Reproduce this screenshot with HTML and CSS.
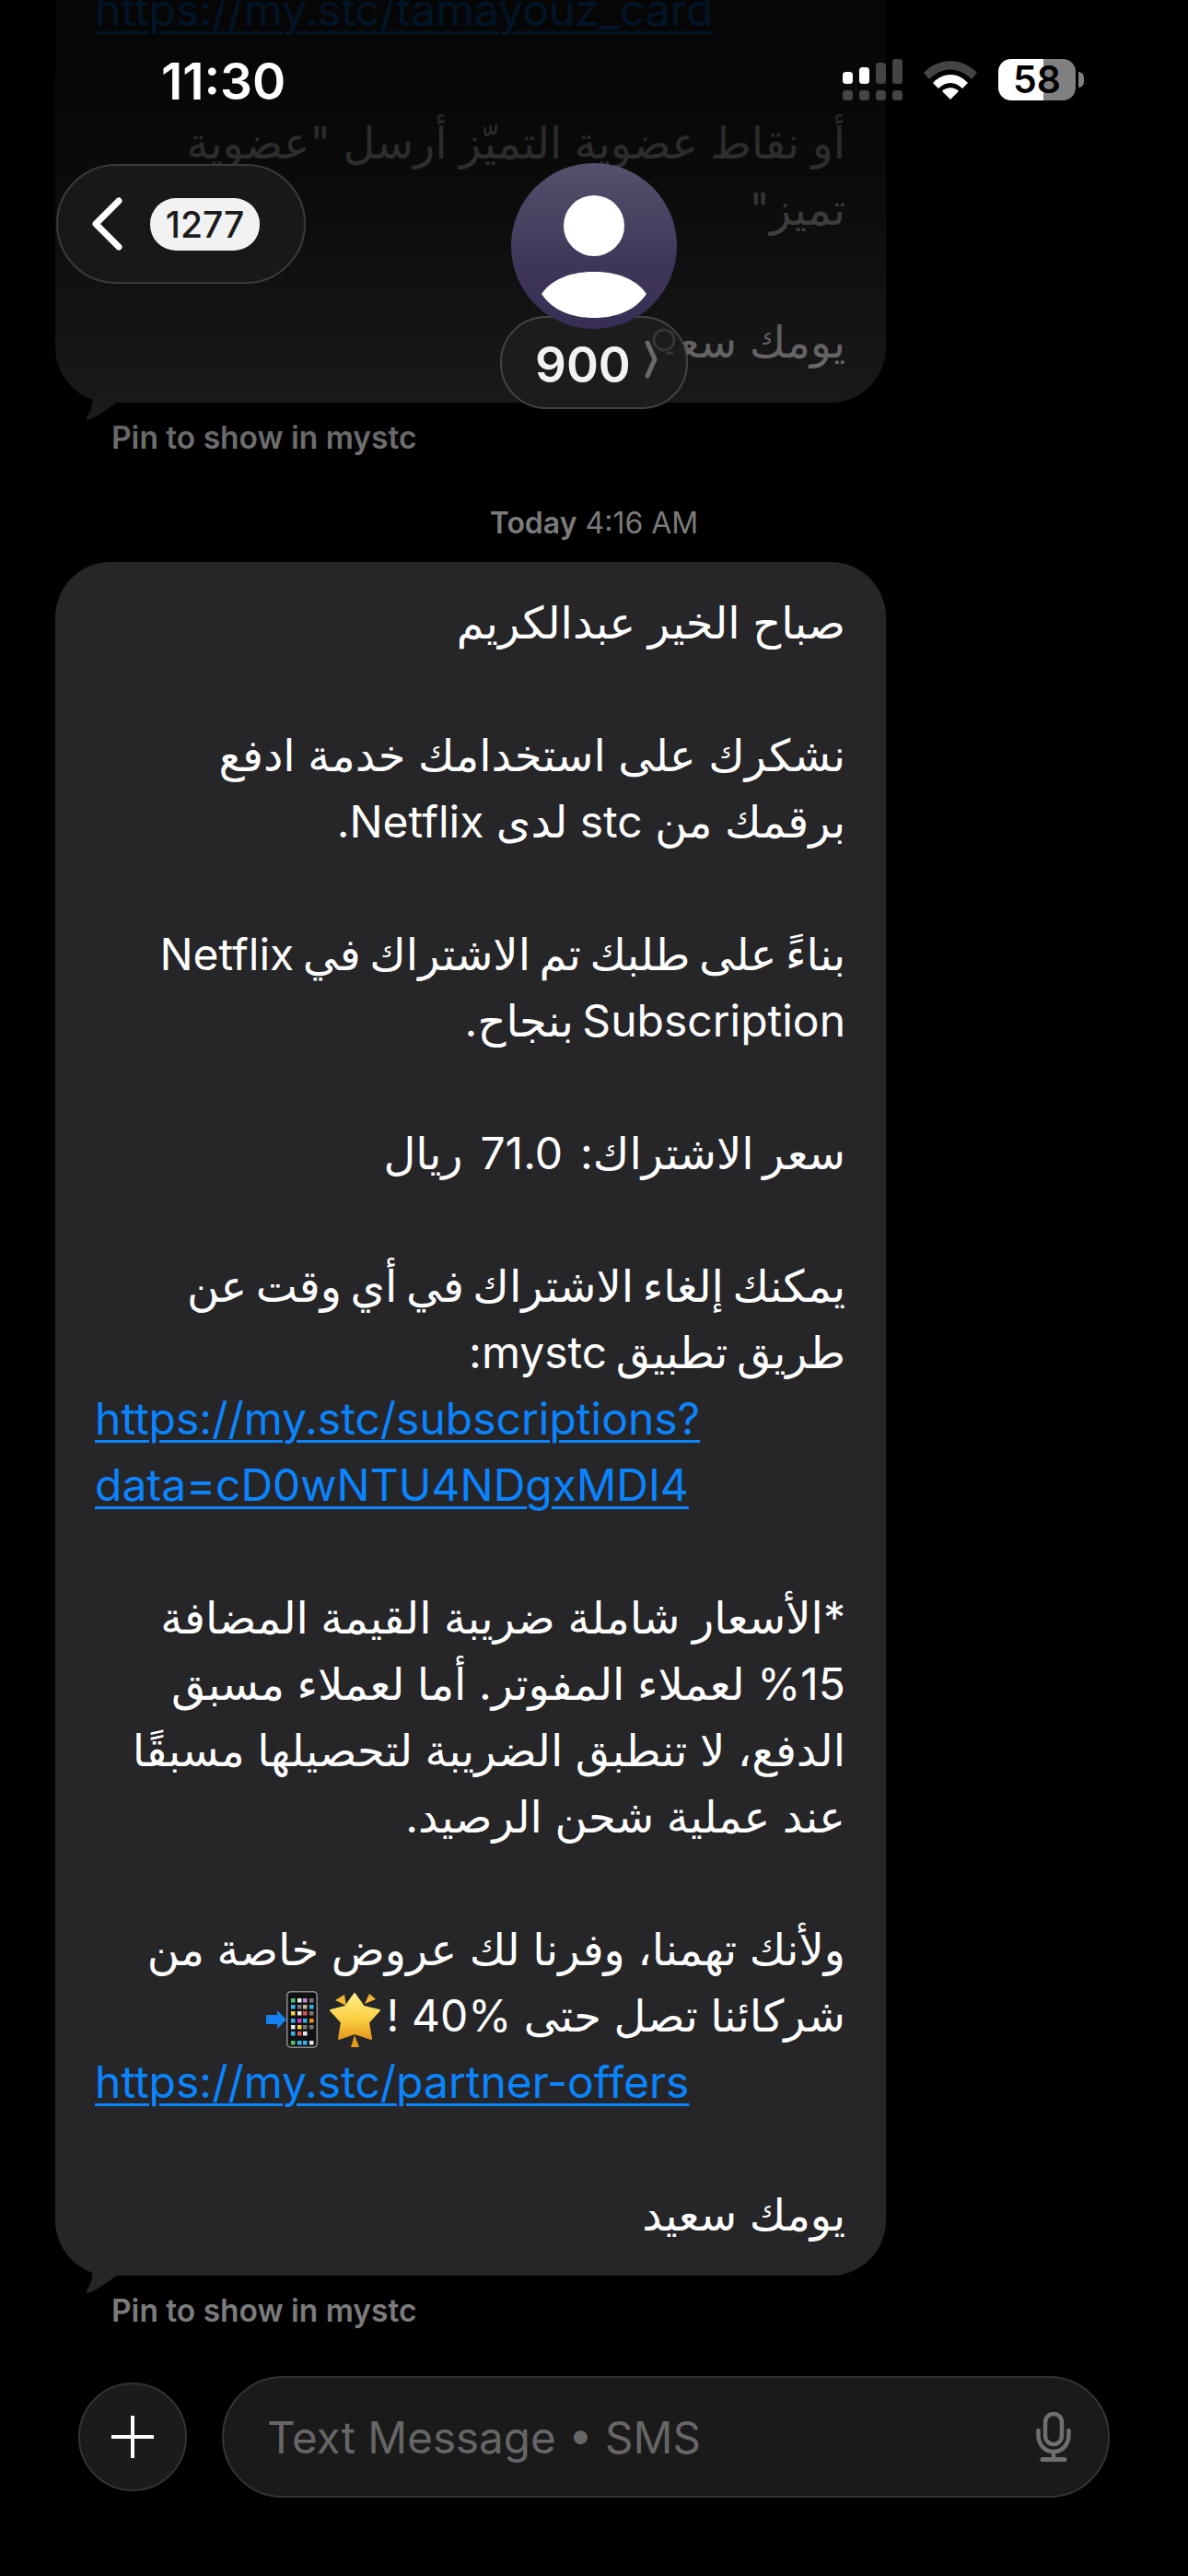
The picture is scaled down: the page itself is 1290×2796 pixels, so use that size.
FILE: index.html
```html
<!DOCTYPE html>
<html lang="ar">
<head>
  <meta charset="UTF-8">
  <title>900</title>
  <link rel="stylesheet" href="styles.css">
</head>
<body>
<div class="screen">

  <!-- messages -->
  <main class="thread">
    <div class="bubble bubble-old">
      <a class="url">https://my.stc/tamayouz_card</a>
      <p class="para">أو نقاط عضوية التميّز أرسل "عضوية<br>تميز"</p>
      <p class="para">يومك سعيد</p>
      <svg class="tail" viewBox="0 0 50 32"><path d="M0 0 L6 0 C8 12 4 20 0 26 C-1 28 1 30 4 28 C14 24 24 16 46 0 Z"/></svg>
    </div>
    <div class="note">Pin to show in mystc</div>

    <div class="stamp"><b>Today</b> 4:16 AM</div>

    <div class="bubble">
      <p class="para">صباح الخير عبدالكريم</p>
      <p class="para">نشكرك على استخدامك خدمة ادفع<br>برقمك من stc لدى Netflix.</p>
      <p class="para para-narrow">بناءً على طلبك تم الاشتراك في Netflix<br>Subscription بنجاح.</p>
      <p class="para para-narrow">سعر الاشتراك:  71.0  ريال</p>
      <p class="para para-tight para-narrow">يمكنك إلغاء الاشتراك في أي وقت عن<br>طريق تطبيق mystc:</p>
      <a class="url">https://my.stc/subscriptions?<br>data=cD0wNTU4NDgxMDI4</a>
      <p class="para">*الأسعار شاملة ضريبة القيمة المضافة<br>%15 لعملاء المفوتر. أما لعملاء مسبق<br>الدفع، لا تنطبق الضريبة لتحصيلها مسبقًا<br>عند عملية شحن الرصيد.</p>
      <p class="para para-tight">ولأنك تهمنا، وفرنا لك عروض خاصة من<br>شركائنا تصل حتى %40 ! <svg class="emoji star" viewBox="0 0 58 62">
          <defs><linearGradient id="starFill" x1="0" y1="0" x2="0" y2="1"><stop offset="0" stop-color="#fff08a"/><stop offset=".55" stop-color="#fbd043"/><stop offset="1" stop-color="#e59a1c"/></linearGradient></defs>
          <path fill="url(#starFill)" stroke="url(#starFill)" stroke-width="2" stroke-linejoin="round" d="M29 3 L39 17 L56 21 L44 34 L47 52 L29 46 L12 52 L15 34 L3 21 L19 17 Z"/>
          <path fill="#f2b632" d="M8 10 L18 4 L20 16 Z M40 14 L45 3 L52 9 Z"/>
          <path fill="#e79c1e" d="M29 48 L34 61 L25 61 Z"/>
        </svg><svg class="emoji phone" viewBox="0 0 58 62">
          <path fill="#1580f0" d="M1 26 H13 V21 L23 31 L13 41 V36 H1 Z"/>
          <rect x="23" y="0" width="34" height="62" rx="5" fill="#8d8d93"/>
          <rect x="24.500" y="1.500" width="31" height="59" rx="4" fill="#111113"/>
          <g fill="#4cc26c"><rect x="28" y="8" width="4.500" height="4.500"/><rect x="28" y="54" width="4.500" height="4.500"/></g>
          <g fill="#e8e8ec"><rect x="35" y="8" width="4.500" height="4.500"/><rect x="35" y="22" width="4.500" height="4.500"/><rect x="28" y="37" width="4.500" height="4.500"/><rect x="41" y="44" width="4.500" height="4.500"/><rect x="48" y="54" width="4.500" height="4.500"/></g>
          <g fill="#c58ad8"><rect x="41" y="8" width="4.500" height="4.500"/></g>
          <g fill="#77777c"><rect x="48" y="8" width="4.500" height="4.500"/><rect x="35" y="15" width="4.500" height="4.500"/><rect x="48" y="22" width="4.500" height="4.500"/><rect x="41" y="37" width="4.500" height="4.500"/><rect x="48" y="37" width="4.500" height="4.500"/></g>
          <g fill="#34b4e8"><rect x="28" y="15" width="4.500" height="4.500"/><rect x="48" y="15" width="4.500" height="4.500"/><rect x="28" y="30" width="4.500" height="4.500"/><rect x="41" y="30" width="4.500" height="4.500"/><rect x="28" y="44" width="4.500" height="4.500"/><rect x="35" y="54" width="4.500" height="4.500"/><rect x="41" y="54" width="4.500" height="4.500"/></g>
          <g fill="#c9b48e"><rect x="41" y="15" width="4.500" height="4.500"/></g>
          <g fill="#f2d23c"><rect x="28" y="22" width="4.500" height="4.500"/><rect x="35" y="37" width="4.500" height="4.500"/></g>
          <g fill="#dc5450"><rect x="41" y="22" width="4.500" height="4.500"/><rect x="35" y="44" width="4.500" height="4.500"/></g>
          <g fill="#d43cc0"><rect x="35" y="30" width="4.500" height="4.500"/></g>
          <g fill="#ee8f1c"><rect x="48" y="30" width="4.500" height="4.500"/></g>
        </svg></p>
      <a class="url">https://my.stc/partner-offers</a>
      <p class="para">يومك سعيد</p>
      <svg class="tail" viewBox="0 0 50 32"><path d="M0 0 L6 0 C8 12 4 20 0 26 C-1 28 1 30 4 28 C14 24 24 16 46 0 Z"/></svg>
    </div>
    <div class="note">Pin to show in mystc</div>

    <div class="composer">
      <button class="plus">
        <svg viewBox="0 0 46 46" width="46" height="46"><path d="M23 0.5 V45.5 M0.5 23 H45.5" stroke="#fff" stroke-width="4" stroke-linecap="round" fill="none"/></svg>
      </button>
      <div class="field">
        <span class="placeholder">Text Message • SMS</span>
        <svg class="mic" viewBox="0 0 38 54" width="38" height="54" fill="none" stroke="#6f6f6f" stroke-width="4.500">
          <rect x="10" y="2" width="18" height="33" rx="9"/>
          <path d="M2.500 20 V25 C2.500 36 10 43 19 43 C28 43 35.500 36 35.500 25 V20 M19 43 V51" stroke-linecap="round"/>
          <path d="M7 51.500 H31" stroke-width="5" stroke-linecap="round"/>
        </svg>
      </div>
    </div>
  </main>

  <!-- fades the messages scrolled under the header -->
  <div class="fade"></div>

  <header class="header">
    <div class="status">
      <span class="clock">11:30</span>
      <div class="status-icons">
        <svg viewBox="0 0 65 45" width="65" height="45">
          <g fill="#fff"><rect x="0" y="14" width="11" height="13" rx="3.500"/><rect x="18" y="9" width="11" height="18" rx="3.500"/></g>
          <g fill="#444"><rect x="36" y="4" width="11" height="23" rx="3.500"/><rect x="54" y="0" width="11" height="27" rx="3.500"/>
            <rect x="0" y="34" width="11" height="11" rx="3.500"/><rect x="18" y="34" width="11" height="11" rx="3.500"/><rect x="36" y="34" width="11" height="11" rx="3.500"/><rect x="54" y="34" width="11" height="11" rx="3.500"/></g>
        </svg>
        <svg viewBox="0 0 58 42" width="58" height="42">
          <path fill="#444" d="M0 13 C16 -4 42 -4 58 13 L52 20 C38 6 20 6 6 20 Z"/>
          <path fill="#fff" d="M10 24 C21 12 37 12 48 24 L42 30 C34 22 24 22 16 30 Z"/>
          <path fill="#fff" d="M20 33 C25 28 33 28 38 33 L29 42 Z"/>
        </svg>
        <div class="battery"><span class="battery-level">58</span><i class="battery-nub"></i></div>
      </div>
    </div>
    <nav class="nav">
      <a class="back">
        <svg viewBox="0 0 34 58" width="34" height="58"><path d="M30 4 L5 29 L30 54" fill="none" stroke="#fff" stroke-width="7" stroke-linecap="round" stroke-linejoin="round"/></svg>
        <span class="badge">1277</span>
      </a>
      <div class="contact">
        <div class="avatar">
          <svg viewBox="0 0 180 180" width="180" height="180">
            <circle cx="90" cy="68" r="33" fill="#fff"/>
            <path fill="#fff" d="M33 142 C45 125 66 118 90 118 C114 118 135 125 147 142 C135 160 114 168 90 168 C66 168 45 160 33 142 Z"/>
          </svg>
        </div>
        <div class="contact-name">900
          <svg class="chevron" viewBox="0 0 40 70" width="40" height="70">
            <circle cx="24" cy="13" r="11" fill="none" stroke="#363636" stroke-width="3"/>
            <path d="M26 27 H34" stroke="#363636" stroke-width="3"/>
            <path d="M6 16 L14 34 L6 52" fill="none" stroke="#6a6a6a" stroke-width="5" stroke-linecap="round" stroke-linejoin="round"/>
          </svg>
        </div>
      </div>
    </nav>
  </header>

</div>
</body>
</html>
```

FILE: styles.css
```css
* { box-sizing: border-box; }
html, body { margin: 0; background: #000; }
.screen {
  position: relative; width: 1290px; height: 2796px; overflow: hidden;
  font-family: Inter, "DejaVu Sans", sans-serif; color: #fff;
}

/* messages */
.thread { display: flex; flex-direction: column; margin-top: -55px; }
.bubble {
  position: relative; width: 902px; margin-left: 60px;
  padding: 30px 44px 30px 43px; border-radius: 60px;
  background: #262628; font-size: 48px; line-height: 72px;
}
.bubble-old { color: #b0b0b0; }
.para { margin: 0 0 72px; direction: rtl; text-align: right; white-space: pre; }
.para:last-of-type { margin-bottom: 0; }
.para-tight { margin-bottom: 0; }
.para-narrow { word-spacing: -4px; }
.url {
  display: block; direction: ltr; text-align: left; white-space: nowrap;
  color: #0a84ff; text-decoration: underline; text-underline-offset: 6px;
  text-decoration-thickness: 3px; margin-bottom: 72px;
}
.tail { position: absolute; left: 34px; bottom: -22px; width: 50px; height: 32px; fill: #262628; overflow: visible; }
.emoji { display: inline-block; vertical-align: middle; }
.star { width: 58px; height: 62px; margin: 0 -8px 0 10px; }
.phone { width: 58px; height: 62px; }

.note {
  margin: 18px 0 0 121px; height: 40px; line-height: 40px;
  font-size: 33.500px; font-weight: 600; color: #7b7b7b;
}
.stamp {
  margin: 53px 0 22px; height: 40px; line-height: 40px; text-align: center;
  font-size: 32px; color: #7b7b7b;
}
.stamp b { font-weight: 600; }

.composer { display: flex; align-items: center; gap: 38px; margin: 51px 85px 0; }
.plus {
  width: 118px; height: 118px; border-radius: 50%; padding: 0;
  display: flex; align-items: center; justify-content: center;
  background: #1b1b1b; border: 2px solid #333;
}
.field {
  width: 964px; height: 132px; flex-shrink: 0; border-radius: 66px;
  background: #1a1a1a; border: 2px solid #333;
  display: flex; align-items: center; justify-content: space-between; padding: 0 40px 0 47px;
}
.placeholder { font-size: 47.500px; color: #666; }

/* header */
.fade {
  position: absolute; left: 0; right: 0; top: 0; height: 500px;
  background: linear-gradient(rgba(0,0,0,.86), rgba(0,0,0,.72) 40%, rgba(0,0,0,.35) 87%, rgba(0,0,0,0));
}
.header { position: absolute; left: 0; right: 0; top: 0; }
.status {
  height: 177px; display: flex; justify-content: space-between; align-items: flex-start;
  padding: 64px 122px 0 175px;
}
.clock { font-size: 55px; line-height: 48px; font-weight: 600; }
.status-icons { display: flex; align-items: center; gap: 23px; }
.battery {
  position: relative; width: 84px; height: 45px; border-radius: 14px;
  background: linear-gradient(90deg, #fff 58%, #808080 58%);
  color: #000; font-size: 41px; font-weight: 600; line-height: 45px; text-align: center;
}
.battery-nub {
  position: absolute; left: 87px; top: 14px; width: 6px; height: 17px;
  border-radius: 0 6px 6px 0; background: #808080;
}
.nav { display: grid; grid-template-columns: 1fr auto 1fr; padding: 0 61px; align-items: start; }
.back {
  width: 271px; height: 130px; margin-top: 1px; border-radius: 65px;
  background: #181818; border: 2px solid #3a3a3a;
  display: flex; align-items: center; gap: 30px; padding-left: 36px;
}
.badge {
  width: 119px; height: 57px; border-radius: 28px; background: #f2f2f2; color: #1c1c1c;
  font-size: 39px; font-weight: 500; line-height: 57px; text-align: center;
}
.contact { display: flex; flex-direction: column; align-items: center; }
.avatar {
  position: relative; z-index: 1; width: 180px; height: 180px; border-radius: 50%;
  background: linear-gradient(#55506c, #3f3759 60%, #382e55);
}
.contact-name {
  width: 204px; height: 101px; margin-top: -14px; border-radius: 50px;
  background: #1c1c1c; border: 2px solid #444;
  display: flex; align-items: center; gap: 12px; padding: 5px 0 0 36px;
  font-size: 53px; font-weight: 600; color: #f2f2f2;
}
.chevron { margin-top: -10px; }
```
